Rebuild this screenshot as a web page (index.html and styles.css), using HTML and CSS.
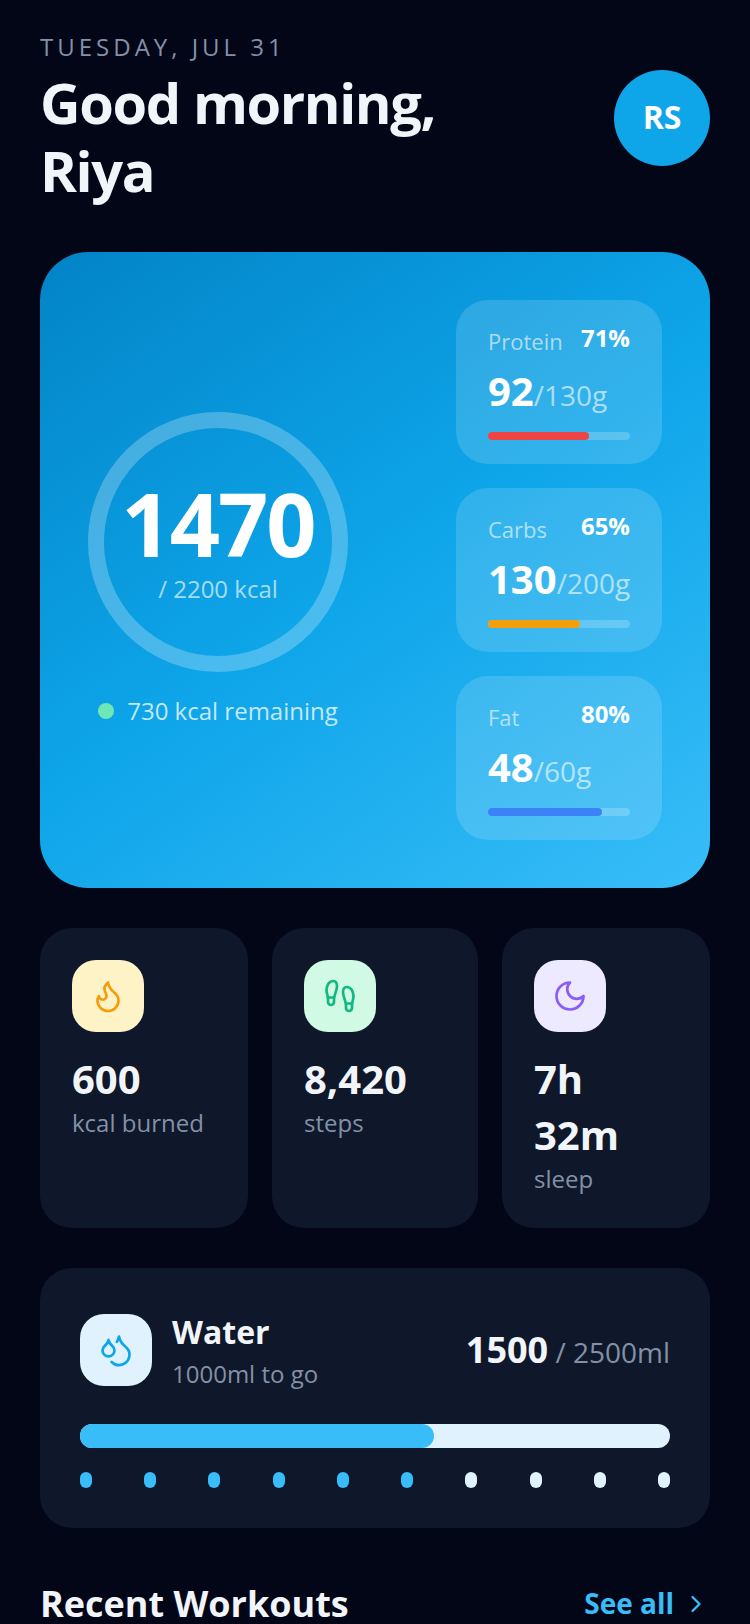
FILE: index.html
```html
<!DOCTYPE html>
<html lang="en">
<head>
  <meta charset="UTF-8" />
  <title>Health dashboard</title>
  <meta name="viewport" content="width=device-width, initial-scale=1.0" />
  <link rel="stylesheet" href="styles.css">
</head>
<body>

<div class="page">
  <header class="top">
    <div>
      <p class="date">TUESDAY, JUL 31</p>
      <h1>Good morning,<br>Riya</h1>
    </div>
    <div class="avatar">RS</div>
  </header>

  <!-- Calories -->
  <section class="summary">
    <div class="calories">
      <div class="ring">
        <div class="ring-value">1470</div>
        <div class="ring-goal">/ 2200 kcal</div>
      </div>
      <div class="remaining"><span class="dot"></span>730 kcal remaining</div>
    </div>

    <div class="macros">
      <div class="macro">
        <div class="macro-head"><span class="macro-name">Protein</span><span class="macro-pct">71%</span></div>
        <div class="macro-amount"><b>92</b>/130g</div>
        <div class="macro-track"><div class="macro-fill red" style="width: 71%"></div></div>
      </div>
      <div class="macro">
        <div class="macro-head"><span class="macro-name">Carbs</span><span class="macro-pct">65%</span></div>
        <div class="macro-amount"><b>130</b>/200g</div>
        <div class="macro-track"><div class="macro-fill amber" style="width: 65%"></div></div>
      </div>
      <div class="macro">
        <div class="macro-head"><span class="macro-name">Fat</span><span class="macro-pct">80%</span></div>
        <div class="macro-amount"><b>48</b>/60g</div>
        <div class="macro-track"><div class="macro-fill blue" style="width: 80%"></div></div>
      </div>
    </div>
  </section>

  <!-- Stats -->
  <section class="stats">
    <div class="stat">
      <div class="icon-box bg-amber">
        <svg class="icon" viewBox="0 0 24 24" stroke="#f59e0b"><path d="M8.5 14.5A2.5 2.5 0 0 0 11 12c0-1.38-.5-2-1-3-1.072-2.143-.224-4.054 2-6 .5 2.5 2 4.9 4 6.5 2 1.6 3 3.5 3 5.5a7 7 0 1 1-14 0c0-1.153.433-2.294 1-3a2.5 2.5 0 0 0 2.5 2.5z"/></svg>
      </div>
      <div class="stat-value">600</div>
      <div class="stat-label">kcal burned</div>
    </div>
    <div class="stat">
      <div class="icon-box bg-green">
        <svg class="icon" viewBox="0 0 24 24" stroke="#10b981"><path d="M4 16v-2.38C4 11.5 2.97 10.5 3 8c.03-2.72 1.49-6 4.5-6C9.37 2 10 3.8 10 5.5c0 3.11-2 5.66-2 8.68V16a2 2 0 1 1-4 0Z"/><path d="M20 20v-2.38c0-2.12 1.03-3.12 1-5.62-.03-2.72-1.49-6-4.5-6C14.63 6 14 7.8 14 9.5c0 3.11 2 5.66 2 8.68V20a2 2 0 1 0 4 0Z"/><path d="M16 17h4"/><path d="M4 13h4"/></svg>
      </div>
      <div class="stat-value">8,420</div>
      <div class="stat-label">steps</div>
    </div>
    <div class="stat">
      <div class="icon-box bg-violet">
        <svg class="icon" viewBox="0 0 24 24" stroke="#8b5cf6"><path d="M12 3a6 6 0 0 0 9 9 9 9 0 1 1-9-9Z"/></svg>
      </div>
      <div class="stat-value">7h<br>32m</div>
      <div class="stat-label">sleep</div>
    </div>
  </section>

  <!-- Water -->
  <section class="water">
    <div class="water-head">
      <div class="water-info">
        <div class="icon-box bg-sky">
          <svg class="icon" viewBox="0 0 24 24" stroke="#0ea5e9"><path d="M7 16.3c2.2 0 4-1.83 4-4.05 0-1.16-.57-2.26-1.71-3.19S7.29 6.75 7 5.3c-.29 1.45-1.14 2.84-2.29 3.76S3 11.1 3 12.25c0 2.22 1.8 4.05 4 4.05z"/><path d="M12.56 6.6A10.97 10.97 0 0 0 14 3.02c.5 2.5 2 4.9 4 6.5s3 3.5 3 5.5a6.98 6.98 0 0 1-11.91 4.97"/></svg>
        </div>
        <div>
          <div class="water-title">Water</div>
          <div class="water-sub">1000ml to go</div>
        </div>
      </div>
      <div class="water-total"><b>1500</b> / 2500ml</div>
    </div>
    <div class="water-track"><div class="water-fill" style="width: 60%"></div></div>
    <div class="glasses">
      <span class="glass full"></span>
      <span class="glass full"></span>
      <span class="glass full"></span>
      <span class="glass full"></span>
      <span class="glass full"></span>
      <span class="glass full"></span>
      <span class="glass"></span>
      <span class="glass"></span>
      <span class="glass"></span>
      <span class="glass"></span>
    </div>
  </section>

  <div class="section-head">
    <h2>Recent Workouts</h2>
    <a class="see-all" href="#">See all
      <svg class="chevron" viewBox="0 0 24 24" stroke="#38bdf8"><path d="m9 18 6-6-6-6"/></svg>
    </a>
  </div>
</div>

</body>
</html>
```

FILE: styles.css
```css
* {
  box-sizing: border-box;
}

html, body {
  height: 1624px;
  overflow: hidden;
}

body {
  margin: 0;
  background: #020617;
  color: #f1f5f9;
  font-family: "Open Sans", sans-serif;
  line-height: 1.4;
}

.page {
  padding: 30px 40px 0;
}

svg {
  fill: none;
  stroke-width: 2;
  stroke-linecap: round;
  stroke-linejoin: round;
}

/* Header */
.top {
  display: flex;
  justify-content: space-between;
  align-items: center;
}

.date {
  margin: 0 0 4px;
  font-size: 24px;
  letter-spacing: 4px;
  color: #8391a7;
}

h1 {
  margin: 0;
  font-size: 56px;
  line-height: 68px;
  font-weight: 700;
  letter-spacing: -1.4px;
}

.avatar {
  width: 96px;
  height: 96px;
  margin-top: 2px;
  border-radius: 50%;
  background: #0ea5e9;
  color: white;
  font-size: 32px;
  font-weight: 700;
  display: flex;
  align-items: center;
  justify-content: center;
}

/* Calories card */
.summary {
  margin-top: 48px;
  padding: 48px;
  border-radius: 48px;
  background: linear-gradient(145deg, #0284c7 0%, #0ea5e9 50%, #38bdf8 100%);
  display: flex;
  justify-content: space-between;
  align-items: center;
  color: white;
}

.calories {
  display: flex;
  flex-direction: column;
  align-items: center;
  gap: 22px;
}

.ring {
  width: 260px;
  height: 260px;
  border-radius: 50%;
  border: 16px solid rgba(255,255,255,0.25);
  display: flex;
  flex-direction: column;
  align-items: center;
  justify-content: center;
}

.ring-value {
  font-size: 88px;
  font-weight: 700;
  line-height: 1;
  letter-spacing: -2px;
}

.ring-goal {
  margin-top: 5px;
  font-size: 24px;
  color: rgba(255,255,255,0.65);
}

.remaining {
  display: flex;
  align-items: center;
  gap: 13px;
  font-size: 24px;
  color: rgba(255,255,255,0.75);
}

.dot {
  width: 16px;
  height: 16px;
  border-radius: 50%;
  background: #6ee7b7;
}

.macros {
  width: 206px;
  display: flex;
  flex-direction: column;
  gap: 24px;
}

.macro {
  height: 164px;
  padding: 20px 32px;
  border-radius: 32px;
  background: rgba(255,255,255,0.15);
}

.macro-head {
  display: flex;
  justify-content: space-between;
  align-items: center;
}

.macro-name {
  margin-top: 6px;
  font-size: 22px;
  color: rgba(255,255,255,0.6);
}

.macro-pct {
  font-size: 24px;
  font-weight: 700;
}

.macro-amount {
  margin-top: 7px;
  font-size: 28px;
  color: rgba(255,255,255,0.6);
}

.macro-amount b {
  font-size: 40px;
  font-weight: 700;
  color: white;
}

.macro-track {
  height: 8px;
  margin-top: 13px;
  border-radius: 4px;
  background: rgba(255,255,255,0.2);
}

.macro-fill {
  height: 100%;
  border-radius: 4px;
}

.red { background: #ef4444; }
.amber { background: #f59e0b; }
.blue { background: #3b82f6; }

/* Stats */
.stats {
  margin-top: 40px;
  display: grid;
  grid-template-columns: 208px 206px 208px;
  gap: 24px;
}

.stat {
  padding: 32px;
  height: 300px;
  border-radius: 32px;
  background: #0f172a;
}

.icon-box {
  width: 72px;
  height: 72px;
  flex-shrink: 0;
  border-radius: 24px;
  display: flex;
  align-items: center;
  justify-content: center;
}

.icon {
  width: 36px;
  height: 36px;
  stroke-width: 1.8;
}

.bg-amber { background: #fef3c7; }
.bg-green { background: #d1fae5; }
.bg-violet { background: #ede9fe; }
.bg-sky { background: #e0f2fe; }

.stat-value {
  margin-top: 19px;
  font-size: 40px;
  font-weight: 700;
}

.stat-label {
  margin-top: -1px;
  font-size: 24px;
  color: #8391a7;
}

/* Water */
.water {
  margin-top: 40px;
  padding: 40px;
  border-radius: 32px;
  background: #0f172a;
}

.water-head {
  display: flex;
  justify-content: space-between;
  align-items: center;
}

.water-info {
  display: flex;
  align-items: center;
  gap: 20px;
}

.water-title {
  font-size: 32px;
  line-height: 1.5;
  font-weight: 700;
}

.water-sub {
  font-size: 24px;
  line-height: 1.5;
  color: #8391a7;
}

.water-total {
  padding-top: 2px;
  font-size: 28px;
  color: #8391a7;
}

.water-total b {
  font-size: 36px;
  font-weight: 700;
  color: #f1f5f9;
}

.water-track {
  height: 24px;
  margin-top: 32px;
  border-radius: 12px;
  background: #e0f2fe;
}

.water-fill {
  height: 100%;
  border-radius: 12px;
  background: #38bdf8;
}

.glasses {
  margin-top: 24px;
  display: flex;
  justify-content: space-between;
}

.glass {
  width: 12px;
  height: 16px;
  border-radius: 6px;
  background: #e0f2fe;
}

.glass.full {
  background: #38bdf8;
}

/* Workouts heading */
.section-head {
  margin-top: 51px;
  display: flex;
  justify-content: space-between;
  align-items: center;
}

h2 {
  margin: 0;
  font-size: 36px;
  font-weight: 700;
}

.see-all {
  display: flex;
  align-items: center;
  gap: 8px;
  font-size: 28px;
  font-weight: 700;
  color: #38bdf8;
  text-decoration: none;
}

.chevron {
  width: 28px;
  height: 28px;
}
```
